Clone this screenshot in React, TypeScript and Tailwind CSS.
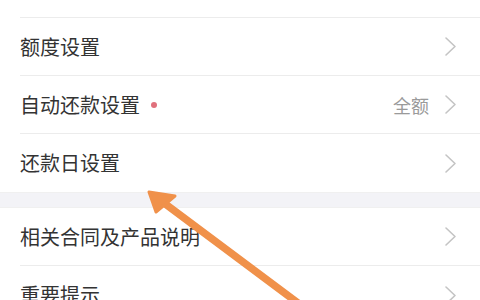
import React from 'react';

const Chevron: React.FC = () => (
  <svg width="13" height="21" viewBox="0 0 13 21" fill="none" className="shrink-0">
    <path d="M2 2 L11 10.5 L2 19" stroke="#c4c4c4" strokeWidth="1.6" strokeLinecap="round" strokeLinejoin="round" />
  </svg>
);

type RowProps = {
  label: string;
  value?: string;
  dot?: boolean;
  divider?: boolean;
};

const Row: React.FC<RowProps> = ({ label, value, dot, divider = true }) => (
  <div className="pl-5">
    <div className={`flex h-[58px] items-center pr-[23px] ${divider ? 'border-b border-[#ececec]' : ''}`}>
      <span className="text-[20px] leading-none text-[#333333]">{label}</span>
      {dot && <span className="ml-[11px] mt-[1px] h-[6px] w-[6px] rounded-full bg-[#e0707c]" />}
      <div className="flex-1" />
      {value && <span className="mr-[15px] text-[18px] leading-none text-[#9a9a9a]">{value}</span>}
      <Chevron />
    </div>
  </div>
);

export default function App() {
  return (
    <div
      className="relative h-[300px] w-[480px] overflow-hidden bg-white"
      style={{ fontFamily: '"Noto Sans CJK SC", "Noto Sans", sans-serif' }}
    >
      <div className="pl-5">
        <div className="h-[18px] border-b border-[#ececec]" />
      </div>
      <Row label="额度设置" />
      <Row label="自动还款设置" value="全额" dot />
      <Row label="还款日设置" divider={false} />
      <div className="h-[16px] border-y border-[#f0f0f0] bg-[#f3f3f7]" />
      <Row label="相关合同及产品说明" />
      <Row label="重要提示" divider={false} />

      <svg className="pointer-events-none absolute left-0 top-0" width="480" height="300" viewBox="0 0 480 300">
        <line x1="160" y1="200" x2="310" y2="312" stroke="#f0914a" strokeWidth="7.5" strokeLinecap="round" />
        <path d="M149 192 L175 196 L156 212 Z" fill="#f0914a" stroke="#f0914a" strokeWidth="3" strokeLinejoin="round" />
      </svg>
    </div>
  );
}
